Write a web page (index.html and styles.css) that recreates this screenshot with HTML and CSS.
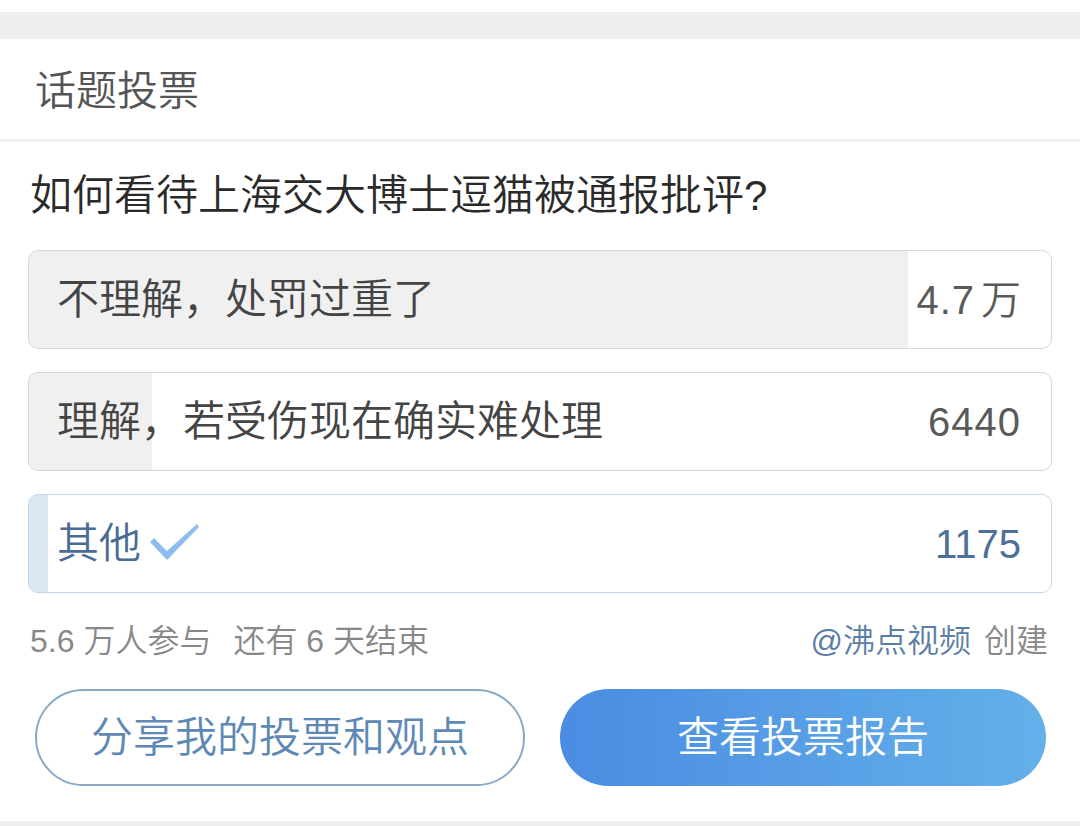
FILE: index.html
```html
<!DOCTYPE html>
<html lang="zh-CN">
<head>
<meta charset="utf-8">
<title>话题投票</title>
<link rel="stylesheet" href="styles.css">
</head>
<body>
<div class="page">
  <div class="top-white"></div>
  <div class="band"></div>
  <header class="head">话题投票</header>
  <section class="poll">
    <h2 class="question">如何看待上海交大博士逗猫被通报批评?</h2>
    <ul class="options">
      <li class="option" style="--p:86%"><span class="label">不理解，处罚过重了</span><span class="count">4.7<span class="unit">万</span></span></li>
      <li class="option" style="--p:12%"><span class="label">理解，若受伤现在确实难处理</span><span class="count">6440</span></li>
      <li class="option chosen" style="--p:1.9%"><span class="label">其他<svg class="check" width="52" height="42" viewBox="0 0 52 42"><path d="M1 20 L5 16 L18 29 L48 2 L50 5 L18 38 Z" fill="#8dbdee"/></svg></span><span class="count">1175</span></li>
    </ul>
    <div class="meta">
      <div class="meta-left"><span>5.6 万人参与</span><span>还有 6 天结束</span></div>
      <div class="meta-right"><span class="author">@沸点视频</span> 创建</div>
    </div>
    <div class="actions">
      <button class="btn btn-outline">分享我的投票和观点</button>
      <button class="btn btn-fill">查看投票报告</button>
    </div>
  </section>
  <div class="band-bottom"></div>
</div>
</body>
</html>
```
FILE: styles.css
```css
* { box-sizing: border-box; }
html, body { margin: 0; padding: 0; background: #fff; }
body {
  font-family: "Liberation Sans", "Noto Sans CJK SC", sans-serif;
  font-weight: 350;
  color: #333;
}
.page { width: 1080px; }
.top-white { height: 12px; background: #fff; }
.band { height: 27px; background: #efefef; }
.head {
  height: 103px;
  padding: 4px 0 0 35px;
  display: flex;
  align-items: center;
  font-size: 41px;
  line-height: 1;
  color: #555;
  border-bottom: 3px solid #f2f2f2;
}
.poll { padding: 0 28px; }
.question {
  margin: 0;
  height: 108px;
  padding-left: 2px;
  display: flex;
  align-items: center;
  font-size: 42px;
  line-height: 1;
  font-weight: 350;
  color: #2a2a2a;
}
.options {
  list-style: none;
  margin: 0;
  padding: 0;
  display: flex;
  flex-direction: column;
  gap: 23px;
}
.option {
  height: 99px;
  border: 1.5px solid #d8d8d8;
  border-radius: 10px;
  padding: 0 30px 0 28px;
  display: flex;
  align-items: center;
  justify-content: space-between;
  background: linear-gradient(to right, #f0f0f0 var(--p), #fff var(--p));
  font-size: 42px;
  line-height: 1;
  color: #444;
}
.label { display: flex; align-items: center; }
.count { font-size: 40px; letter-spacing: 1px; color: #5a5a5a; }
.unit { margin-left: 6px; letter-spacing: 0; }
.option.chosen {
  border-color: #c6d8e7;
  background: linear-gradient(to right, #dbe7f3 var(--p), #fff var(--p));
  color: #4a6c93;
}
.option.chosen .count { color: #4e6f97; letter-spacing: 0; }
.check { margin-left: 8px; margin-top: -2px; }
.meta {
  height: 96px;
  padding: 0 4px 0 2px;
  display: flex;
  align-items: center;
  justify-content: space-between;
  font-size: 32px;
  line-height: 1;
  color: #888;
}
.meta-left { display: flex; gap: 22px; }
.author { color: #5a7ea7; }
.meta-right { word-spacing: 4px; }
.actions {
  padding: 0 6px 0 7px;
  display: flex;
  gap: 35px;
}
.btn {
  flex: 1;
  height: 97px;
  border-radius: 49px;
  font-family: "Liberation Sans", "Noto Sans CJK SC", sans-serif;
  font-weight: 350;
  font-size: 42px;
  line-height: 1;
  cursor: pointer;
}
.btn-outline {
  background: #fff;
  border: 2px solid #88a9c8;
  color: #5e89b6;
}
.btn-fill {
  border: none;
  background: linear-gradient(to right, #4a8ce2, #64b0e9);
  color: #fff;
}
.band-bottom { height: 6px; margin-top: 35px; background: #efefef; }
```
